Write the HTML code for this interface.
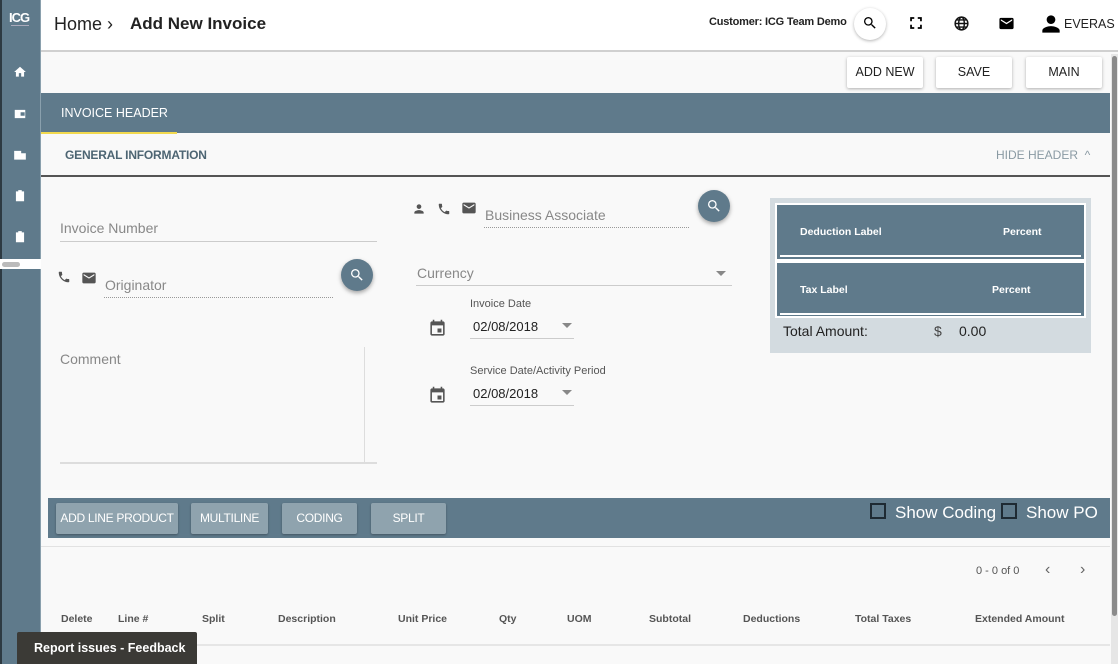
<!DOCTYPE html>
<html><head><meta charset="utf-8"><style>
*{box-sizing:border-box;margin:0;padding:0}
body{width:1118px;height:664px;overflow:hidden;background:#f9f9f9;font-family:"Liberation Sans",sans-serif;position:relative;color:#222}
.a{position:absolute;white-space:nowrap}
.side{left:0;top:0;width:41px;height:664px;background:#5f7a8b;border-left:2px solid #2d3a42;border-right:1px solid #8aa0ad}
.sb{position:absolute;left:11px;width:14px;height:14px}
.top{left:41px;top:0;width:1077px;height:52px;background:#fff;border-bottom:2px solid #d0d0d0}
.btn{background:#fff;box-shadow:0 1px 3px rgba(0,0,0,.3);border-radius:2px;font-size:12.5px;text-align:center;line-height:30px;height:31px;color:#222}
.lbl{color:#888;font-size:14px}
.bb{background:#8fa3ae;color:#fff;font-size:12px;letter-spacing:-0.3px;text-align:center;line-height:31px;height:31px;border-radius:2px;box-shadow:0 1px 2px rgba(0,0,0,.3)}
.th{font-size:10.5px;color:#555;font-weight:bold;top:613px}
.fab{width:32px;height:32px;border-radius:50%;background:#5f7a8b;box-shadow:0 2px 4px rgba(0,0,0,.35)}
svg{display:block}
</style></head><body>
<div class="a side">
 <div class="a" style="left:7px;top:10px;color:#fff;font-weight:bold;font-size:13px;letter-spacing:-1px">ICG</div>
 <div class="a" style="left:9px;top:25px;width:18px;height:1px;background:#aab"></div>
 <svg class="sb" style="top:65px" viewBox="0 0 24 24" fill="#fff"><path d="M10 20v-6h4v6h5v-8h3L12 3 2 12h3v8z"/></svg>
 <svg class="sb" style="top:107px" viewBox="0 0 24 24" fill="#fff"><path d="M3 5h18v14H3zM13 9v6h7V9z"/></svg>
 <svg class="sb" style="top:148px" viewBox="0 0 24 24" fill="#fff"><path d="M2 5h12v15H2zM14 9h8v11h-8z"/></svg>
 <svg class="sb" style="top:189px" viewBox="0 0 24 24" fill="#fff"><path d="M5 4h14v17H5zM9 2h6v3H9z"/></svg>
 <svg class="sb" style="top:230px" viewBox="0 0 24 24" fill="#fff"><path d="M5 4h14v17H5zM9 2h6v3H9z"/></svg>
 <div class="a" style="left:-2px;top:259px;width:41px;height:10px;background:#fff"></div>
 <div class="a" style="left:0;top:262px;width:18px;height:5px;border-radius:3px;background:#bbb"></div>
</div>
<div class="a top"></div>
<div class="a" style="left:54px;top:14px;font-size:18px">Home ›</div>
<div class="a" style="left:130px;top:14px;font-size:17px;font-weight:bold">Add New Invoice</div>
<div class="a" style="left:709px;top:16px;font-size:11px;font-weight:bold;letter-spacing:-0.2px">Customer: ICG Team Demo</div>
<div class="a" style="left:854px;top:8px;width:32px;height:32px;border-radius:50%;background:#fff;box-shadow:0 1px 3px rgba(0,0,0,.3)"></div>
<svg class="a" style="left:862px;top:15px" width="16" height="16" viewBox="0 0 24 24"><path d="M15.5 14h-.79l-.28-.27A6.47 6.47 0 0 0 16 9.5 6.5 6.5 0 1 0 9.5 16c1.61 0 3.09-.59 4.23-1.57l.27.28v.79l5 4.99L20.49 19l-4.99-5zm-6 0C7.01 14 5 11.990 5 9.5S7.01 5 9.5 5 14 7.01 14 9.5 11.99 14 9.5 14z"/></svg>
<svg class="a" style="left:909px;top:16px" width="14" height="14" viewBox="0 0 24 24"><path d="M2 2h7v3H5v4H2zM15 2h7v7h-3V5h-4zM2 15h3v4h4v3H2zM19 15h3v7h-7v-3h4z"/></svg>
<svg class="a" style="left:953px;top:15px" width="17" height="17" viewBox="0 0 24 24" fill="none" stroke="#111" stroke-width="2"><circle cx="12" cy="12" r="9"/><ellipse cx="12" cy="12" rx="4" ry="9"/><path d="M3 12h18M5 7h14M5 17h14"/></svg>
<svg class="a" style="left:998px;top:15px" width="17" height="17" viewBox="0 0 24 24"><path d="M20 4H4c-1.1 0-2 .9-2 2v12c0 1.1.9 2 2 2h16c1.1 0 2-.9 2-2V6c0-1.1-.9-2-2-2zm0 4l-8 5-8-5V6l8 5 8-5v2z"/></svg>
<svg class="a" style="left:1038px;top:11px" width="26" height="26" viewBox="0 0 24 24"><path d="M12 12c2.21 0 4-1.79 4-4s-1.79-4-4-4-4 1.79-4 4 1.79 4 4 4zm0 2c-2.67 0-8 1.34-8 4v2h16v-2c0-2.66-5.33-4-8-4z"/></svg>
<div class="a" style="left:1064px;top:17px;font-size:12.5px">EVERAS</div>
<div class="a" style="left:1111px;top:54px;width:7px;height:610px;background:#e6e6e6"></div>
<div class="a" style="left:1112px;top:56px;width:5px;height:560px;background:#8a8a8a;border-radius:3px"></div>

<div class="a btn" style="left:847px;top:57px;width:76px">ADD NEW</div>
<div class="a btn" style="left:936px;top:57px;width:76px">SAVE</div>
<div class="a btn" style="left:1026px;top:57px;width:76px">MAIN</div>

<div class="a" style="left:41px;top:93px;width:1069px;height:40px;background:#5f7a8b"></div>
<div class="a" style="left:61px;top:106px;font-size:12.5px;color:#fff">INVOICE HEADER</div>
<div class="a" style="left:41px;top:132px;width:136px;height:2px;background:#f2d94e"></div>
<div class="a" style="left:65px;top:148px;font-size:12px;font-weight:bold;color:#4d6573;letter-spacing:-0.2px">GENERAL INFORMATION</div>
<div class="a" style="left:996px;top:148px;font-size:12px;color:#8a9aa3">HIDE HEADER &nbsp;^</div>
<div class="a" style="left:41px;top:175px;width:1069px;height:2px;background:#555"></div>

<div class="a lbl" style="left:60px;top:220px">Invoice Number</div>
<div class="a" style="left:60px;top:241px;width:317px;height:1px;background:#ccc"></div>
<svg class="a" style="left:57px;top:270px" width="14" height="14" viewBox="0 0 24 24" fill="#555"><path d="M6.62 10.79c1.44 2.83 3.76 5.14 6.59 6.59l2.2-2.2c.27-.27.67-.36 1.02-.24 1.12.37 2.33.57 3.57.57.55 0 1 .45 1 1V20c0 .55-.45 1-1 1-9.39 0-17-7.61-17-17 0-.55.45-1 1-1h3.5c.55 0 1 .45 1 1 0 1.25.2 2.45.57 3.57.11.35.03.74-.25 1.02l-2.2 2.2z"/></svg>
<svg class="a" style="left:81px;top:270px" width="16" height="16" viewBox="0 0 24 24" fill="#555"><path d="M20 4H4c-1.1 0-2 .9-2 2v12c0 1.1.9 2 2 2h16c1.1 0 2-.9 2-2V6c0-1.1-.9-2-2-2zm0 4l-8 5-8-5V6l8 5 8-5v2z"/></svg>
<div class="a lbl" style="left:105px;top:277px">Originator</div>
<div class="a" style="left:104px;top:297px;width:229px;border-top:1px dotted #999"></div>
<div class="a fab" style="left:341px;top:259px"></div>
<svg class="a" style="left:349px;top:267px" width="16" height="16" viewBox="0 0 24 24" fill="#fff"><path d="M15.5 14h-.79l-.28-.27A6.47 6.47 0 0 0 16 9.5 6.5 6.5 0 1 0 9.5 16c1.61 0 3.09-.59 4.23-1.57l.27.28v.79l5 4.99L20.49 19l-4.99-5zm-6 0C7.01 14 5 11.99 5 9.5S7.01 5 9.5 5 14 7.01 14 9.5 11.99 14 9.5 14z"/></svg>
<div class="a lbl" style="left:60px;top:351px">Comment</div>
<div class="a" style="left:364px;top:347px;width:1px;height:115px;background:#ddd"></div>
<div class="a" style="left:60px;top:462px;width:317px;height:2px;background:#ddd"></div>

<svg class="a" style="left:412px;top:202px" width="14" height="14" viewBox="0 0 24 24" fill="#555"><path d="M12 12c2.21 0 4-1.79 4-4s-1.79-4-4-4-4 1.79-4 4 1.79 4 4 4zm0 2c-2.67 0-8 1.34-8 4v2h16v-2c0-2.66-5.33-4-8-4z"/></svg>
<svg class="a" style="left:437px;top:202px" width="14" height="14" viewBox="0 0 24 24" fill="#555"><path d="M6.62 10.79c1.44 2.83 3.76 5.14 6.59 6.59l2.2-2.2c.27-.27.67-.36 1.02-.24 1.12.37 2.33.57 3.57.57.55 0 1 .45 1 1V20c0 .55-.45 1-1 1-9.39 0-17-7.61-17-17 0-.55.45-1 1-1h3.5c.55 0 1 .45 1 1 0 1.25.2 2.45.57 3.57.11.35.03.74-.25 1.02l-2.2 2.2z"/></svg>
<svg class="a" style="left:461px;top:200px" width="16" height="16" viewBox="0 0 24 24" fill="#555"><path d="M20 4H4c-1.1 0-2 .9-2 2v12c0 1.1.9 2 2 2h16c1.1 0 2-.9 2-2V6c0-1.1-.9-2-2-2zm0 4l-8 5-8-5V6l8 5 8-5v2z"/></svg>
<div class="a lbl" style="left:485px;top:207px">Business Associate</div>
<div class="a" style="left:484px;top:227px;width:205px;border-top:1px dotted #999"></div>
<div class="a fab" style="left:698px;top:190px"></div>
<svg class="a" style="left:706px;top:198px" width="16" height="16" viewBox="0 0 24 24" fill="#fff"><path d="M15.5 14h-.79l-.28-.27A6.47 6.47 0 0 0 16 9.5 6.5 6.5 0 1 0 9.5 16c1.61 0 3.09-.59 4.23-1.57l.27.28v.79l5 4.99L20.49 19l-4.99-5zm-6 0C7.01 14 5 11.99 5 9.5S7.01 5 9.5 5 14 7.01 14 9.5 11.99 14 9.5 14z"/></svg>
<div class="a lbl" style="left:417px;top:265px">Currency</div>
<div class="a" style="left:716px;top:271px;border:5px solid transparent;border-top-color:#888"></div>
<div class="a" style="left:416px;top:285px;width:316px;height:1px;background:#ccc"></div>
<div class="a" style="left:470px;top:298px;font-size:11px;color:#555">Invoice Date</div>
<svg class="a" style="left:428px;top:319px" width="19" height="19" viewBox="0 0 24 24" fill="#555"><path d="M17 12h-5v5h5v-5zM16 1v2H8V1H6v2H5c-1.11 0-1.99.9-1.99 2L3 19c0 1.1.89 2 2 2h14c1.1 0 2-.9 2-2V5c0-1.1-.9-2-2-2h-1V1h-2zm3 18H5V8h14v11z"/></svg>
<div class="a" style="left:473px;top:319px;font-size:13px">02/08/2018</div>
<div class="a" style="left:562px;top:323px;border:5px solid transparent;border-top-color:#888"></div>
<div class="a" style="left:470px;top:338px;width:104px;height:1px;background:#ccc"></div>
<div class="a" style="left:470px;top:365px;font-size:11px;color:#555">Service Date/Activity Period</div>
<svg class="a" style="left:428px;top:386px" width="19" height="19" viewBox="0 0 24 24" fill="#555"><path d="M17 12h-5v5h5v-5zM16 1v2H8V1H6v2H5c-1.11 0-1.99.9-1.99 2L3 19c0 1.1.89 2 2 2h14c1.1 0 2-.9 2-2V5c0-1.1-.9-2-2-2h-1V1h-2zm3 18H5V8h14v11z"/></svg>
<div class="a" style="left:473px;top:386px;font-size:13px">02/08/2018</div>
<div class="a" style="left:562px;top:390px;border:5px solid transparent;border-top-color:#888"></div>
<div class="a" style="left:470px;top:405px;width:104px;height:1px;background:#ccc"></div>

<div class="a" style="left:770px;top:198px;width:321px;height:155px;background:#d3dbe0"></div>
<div class="a" style="left:775px;top:203px;width:311px;height:115px;background:#fff"></div>
<div class="a" style="left:777px;top:205px;width:307px;height:54px;background:#5f7a8b"></div>
<div class="a" style="left:780px;top:255px;width:301px;height:2px;background:#fff"></div>
<div class="a" style="left:777px;top:263px;width:307px;height:53px;background:#5f7a8b"></div>
<div class="a" style="left:780px;top:313px;width:301px;height:2px;background:#fff"></div>
<div class="a" style="left:800px;top:226px;font-size:10.5px;color:#fff;font-weight:bold">Deduction Label</div>
<div class="a" style="left:1003px;top:226px;font-size:10.5px;color:#fff;font-weight:bold">Percent</div>
<div class="a" style="left:800px;top:284px;font-size:10.5px;color:#fff;font-weight:bold">Tax Label</div>
<div class="a" style="left:992px;top:284px;font-size:10.5px;color:#fff;font-weight:bold">Percent</div>
<div class="a" style="left:783px;top:323px;font-size:14px">Total Amount:</div>
<div class="a" style="left:934px;top:323px;font-size:14px;color:#444">$</div>
<div class="a" style="left:959px;top:323px;font-size:14px">0.00</div>

<div class="a" style="left:48px;top:498px;width:1062px;height:40px;background:#5f7a8b"></div>
<div class="a bb" style="left:56px;top:503px;width:122px">ADD LINE PRODUCT</div>
<div class="a bb" style="left:191px;top:503px;width:77px">MULTILINE</div>
<div class="a bb" style="left:282px;top:503px;width:75px">CODING</div>
<div class="a bb" style="left:371px;top:503px;width:75px">SPLIT</div>
<div class="a" style="left:870px;top:503px;width:16px;height:16px;border:2px solid #1e2a33"></div>
<div class="a" style="left:895px;top:503px;font-size:17px;color:#fff">Show Coding</div>
<div class="a" style="left:1001px;top:503px;width:16px;height:16px;border:2px solid #1e2a33"></div>
<div class="a" style="left:1026px;top:503px;font-size:17px;color:#fff">Show PO</div>
<div class="a" style="left:41px;top:546px;width:1069px;height:1px;background:#e2e2e2"></div>
<div class="a" style="left:976px;top:565px;font-size:11px;color:#555">0 - 0 of 0</div>
<div class="a" style="left:1045px;top:561px;font-size:16px;color:#666">&lsaquo;</div>
<div class="a" style="left:1080px;top:561px;font-size:16px;color:#666">&rsaquo;</div>
<div class="a th" style="left:61px">Delete</div>
<div class="a th" style="left:118px">Line #</div>
<div class="a th" style="left:202px">Split</div>
<div class="a th" style="left:278px">Description</div>
<div class="a th" style="left:398px">Unit Price</div>
<div class="a th" style="left:499px">Qty</div>
<div class="a th" style="left:567px">UOM</div>
<div class="a th" style="left:649px">Subtotal</div>
<div class="a th" style="left:743px">Deductions</div>
<div class="a th" style="left:855px">Total Taxes</div>
<div class="a th" style="left:975px">Extended Amount</div>
<div class="a" style="left:41px;top:644px;width:1069px;height:2px;background:#e6e6e6"></div>
<div class="a" style="left:17px;top:632px;width:180px;height:32px;background:#3b3a36;border-radius:2px 2px 0 0"></div>
<div class="a" style="left:34px;top:641px;font-size:12.5px;color:#fff;font-weight:bold">Report issues - Feedback</div>
</body></html>
